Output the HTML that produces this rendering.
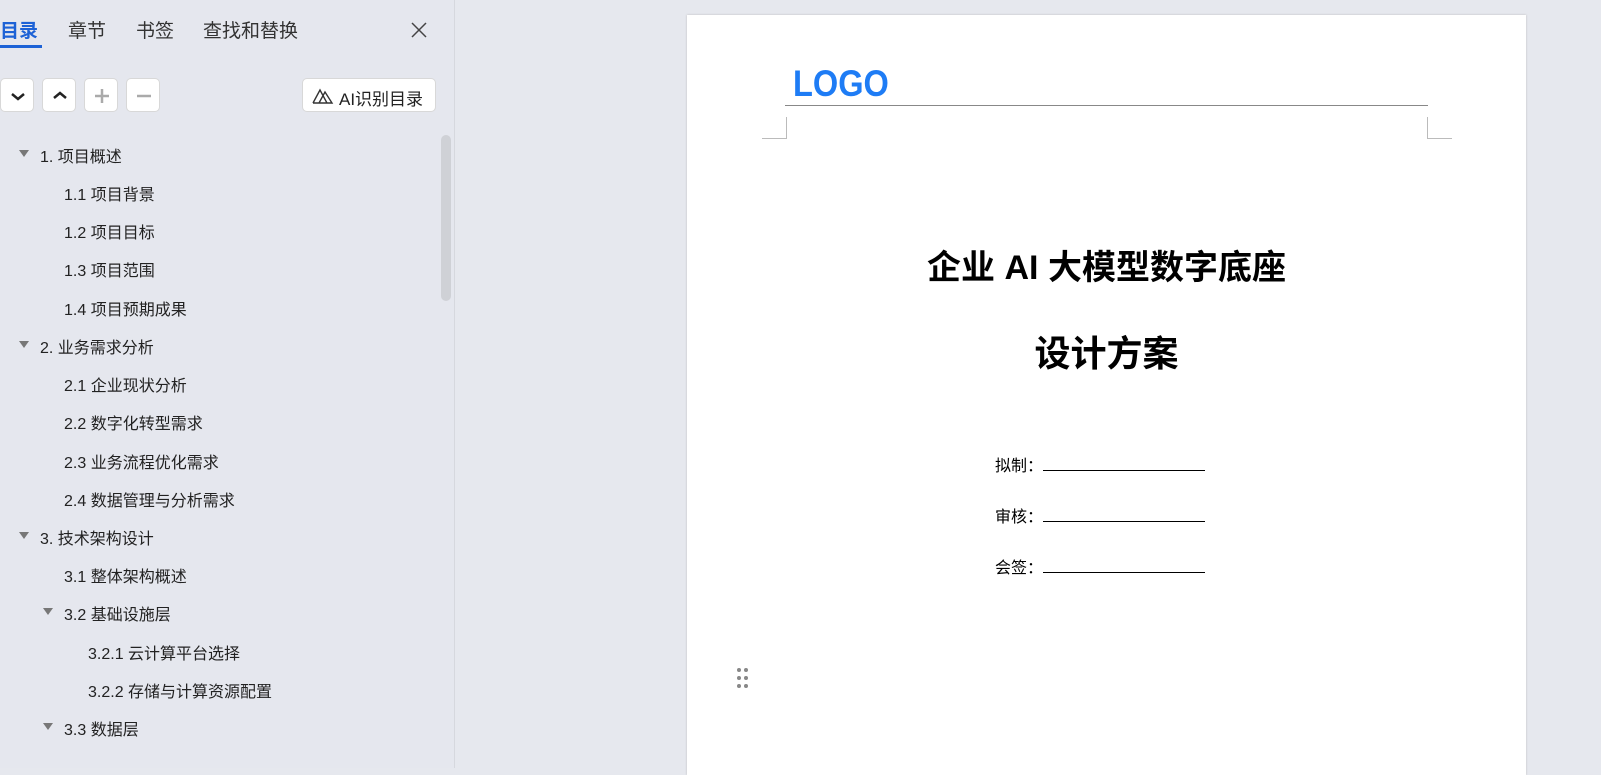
<!DOCTYPE html>
<html><head><meta charset="utf-8">
<style>
*{margin:0;padding:0;box-sizing:border-box}
body{width:1601px;height:768px;overflow:hidden;background:#e6e8ee;font-family:"Liberation Sans","Noto Sans CJK SC",sans-serif;position:relative}
.side{position:absolute;left:0;top:0;width:455px;height:768px;background:#e5e7ee;border-right:1px solid #d6d8de}
.tab{position:absolute;top:16px;font-size:19px;color:#333}
.btn{position:absolute;top:78px;width:34px;height:34px;background:#fff;border:1px solid #d8d8d8;border-radius:5px}
.row{position:absolute;font-size:16px;color:#222;white-space:nowrap}
.tri{position:absolute;width:0;height:0;border-left:5px solid transparent;border-right:5px solid transparent;border-top:7px solid #777}
.page{position:absolute;left:687px;top:15px;width:839px;height:760px;background:#fff;box-shadow:0 0 2px #bbb}
.ab{position:absolute;white-space:nowrap}
</style></head><body>
<div class="side">
  <div class="tab" style="left:0;color:#1d62d6;font-weight:bold">目录</div>
  <div style="position:absolute;left:0;top:45px;width:42px;height:3px;background:#1d62d6"></div>
  <div class="tab" style="left:68px">章节</div>
  <div class="tab" style="left:136px">书签</div>
  <div class="tab" style="left:203px">查找和替换</div>
  <svg style="position:absolute;left:411px;top:22px" width="16" height="16"><path d="M1 1L15 15M15 1L1 15" stroke="#444" stroke-width="1.5"/></svg>
  <div class="btn" style="left:0"><svg width="34" height="34"><path d="M11 15l6 5 6-5" stroke="#222" stroke-width="2.5" fill="none"/></svg></div>
  <div class="btn" style="left:42px"><svg width="34" height="34"><path d="M11 19l6-5 6 5" stroke="#222" stroke-width="2.5" fill="none"/></svg></div>
  <div class="btn" style="left:84px"><svg width="34" height="34"><path d="M17 10v14M10 17h14" stroke="#aaa" stroke-width="2.5"/></svg></div>
  <div class="btn" style="left:126px"><svg width="34" height="34"><path d="M10 17h14" stroke="#aaa" stroke-width="2.5"/></svg></div>
  <div class="btn" style="left:302px;width:134px;font-size:17px;color:#222;padding:6px 0 0 36px">AI识别目录
    <svg style="position:absolute;left:9px;top:8px" width="22" height="18"><path d="M1 16L8 3l7 13H1M7 16l6-11 7 11h-9" stroke="#333" stroke-width="1.4" fill="none"/></svg></div>
  <div style="position:absolute;left:441px;top:135px;width:10px;height:166px;background:#cfd1d6;border-radius:5px"></div>
  <div class="tri" style="left:19px;top:150px"></div><div class="row" style="left:40px;top:143px">1. 项目概述</div>
  <div class="row" style="left:64px;top:181px">1.1 项目背景</div>
  <div class="row" style="left:64px;top:219px">1.2 项目目标</div>
  <div class="row" style="left:64px;top:257px">1.3 项目范围</div>
  <div class="row" style="left:64px;top:296px">1.4 项目预期成果</div>
  <div class="tri" style="left:19px;top:341px"></div><div class="row" style="left:40px;top:334px">2. 业务需求分析</div>
  <div class="row" style="left:64px;top:372px">2.1 企业现状分析</div>
  <div class="row" style="left:64px;top:410px">2.2 数字化转型需求</div>
  <div class="row" style="left:64px;top:449px">2.3 业务流程优化需求</div>
  <div class="row" style="left:64px;top:487px">2.4 数据管理与分析需求</div>
  <div class="tri" style="left:19px;top:532px"></div><div class="row" style="left:40px;top:525px">3. 技术架构设计</div>
  <div class="row" style="left:64px;top:563px">3.1 整体架构概述</div>
  <div class="tri" style="left:43px;top:608px"></div><div class="row" style="left:64px;top:601px">3.2 基础设施层</div>
  <div class="row" style="left:88px;top:640px">3.2.1 云计算平台选择</div>
  <div class="row" style="left:88px;top:678px">3.2.2 存储与计算资源配置</div>
  <div class="tri" style="left:43px;top:723px"></div><div class="row" style="left:64px;top:716px">3.3 数据层</div>
</div>
<div class="page">
  <div class="ab" style="left:106px;top:49px;font-size:37px;line-height:40px;font-weight:900;color:#1e7cf5;transform:scaleX(0.88);transform-origin:left">LOGO</div>
  <div class="ab" style="left:98px;top:90px;width:643px;height:1px;background:#888"></div>
  <div class="ab" style="left:99px;top:102px;width:1px;height:22px;background:#bbb"></div>
  <div class="ab" style="left:75px;top:123px;width:25px;height:1px;background:#bbb"></div>
  <div class="ab" style="left:740px;top:102px;width:1px;height:22px;background:#bbb"></div>
  <div class="ab" style="left:740px;top:123px;width:25px;height:1px;background:#bbb"></div>
  <div class="ab" style="left:0;width:839px;text-align:center;top:225px;font-size:34px;font-weight:bold;color:#000">企业 AI 大模型数字底座</div>
  <div class="ab" style="left:0;width:839px;text-align:center;top:310px;font-size:36px;font-weight:bold;color:#000">设计方案</div>
  <div class="ab" style="left:308px;top:437px;font-size:16px;color:#000">拟制：<span style="display:inline-block;width:162px;border-bottom:1px solid #000;height:14px"></span></div>
  <div class="ab" style="left:308px;top:488px;font-size:16px;color:#000">审核：<span style="display:inline-block;width:162px;border-bottom:1px solid #000;height:14px"></span></div>
  <div class="ab" style="left:308px;top:539px;font-size:16px;color:#000">会签：<span style="display:inline-block;width:162px;border-bottom:1px solid #000;height:14px"></span></div>
  <svg class="ab" style="left:49px;top:652px" width="14" height="24"><g fill="#888"><circle cx="3" cy="3" r="2"/><circle cx="10" cy="3" r="2"/><circle cx="3" cy="11" r="2"/><circle cx="10" cy="11" r="2"/><circle cx="3" cy="19" r="2"/><circle cx="10" cy="19" r="2"/></g></svg>
</div>
</body></html>
